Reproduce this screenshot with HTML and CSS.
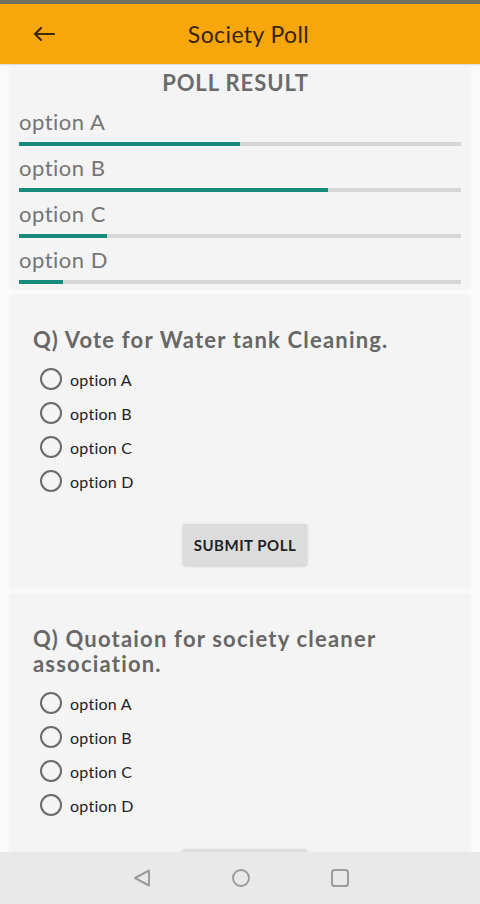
FILE: index.html
```html
<!DOCTYPE html>
<html lang="en">
<head>
  <meta charset="UTF-8" />
  <meta name="viewport" content="width=device-width, initial-scale=1.0" />
  <title>Society Poll</title>
  <link rel="stylesheet" href="styles.css">
</head>
<body>
  <div class="status"></div>

  <!-- App bar -->
  <header class="appbar">
    <svg class="back" width="22" height="14" viewBox="0 0 22 14">
      <path d="M21 7H2M8 1L2 7l6 6" fill="none" stroke="#3d2b10" stroke-width="2.2" stroke-linecap="round" stroke-linejoin="round"/>
    </svg>
    <h1 class="title">Society Poll</h1>
    <span class="spacer"></span>
  </header>

  <main class="content">
    <!-- Result card -->
    <section class="card result">
      <h2>POLL RESULT</h2>
      <div class="row">
        <div class="label">option A</div>
        <div class="track"><div class="fill" style="width:50%"></div></div>
      </div>
      <div class="row">
        <div class="label">option B</div>
        <div class="track"><div class="fill" style="width:70%"></div></div>
      </div>
      <div class="row">
        <div class="label">option C</div>
        <div class="track"><div class="fill" style="width:20%"></div></div>
      </div>
      <div class="row">
        <div class="label">option D</div>
        <div class="track"><div class="fill" style="width:10%"></div></div>
      </div>
    </section>

    <!-- Question 1 -->
    <section class="card poll">
      <h3>Q) Vote for Water tank Cleaning.</h3>
      <label class="opt"><span class="radio"></span>option A</label>
      <label class="opt"><span class="radio"></span>option B</label>
      <label class="opt"><span class="radio"></span>option C</label>
      <label class="opt"><span class="radio"></span>option D</label>
      <div class="actions"><button>SUBMIT POLL</button></div>
    </section>

    <!-- Question 2 -->
    <section class="card poll">
      <h3>Q) Quotaion for society cleaner association.</h3>
      <label class="opt"><span class="radio"></span>option A</label>
      <label class="opt"><span class="radio"></span>option B</label>
      <label class="opt"><span class="radio"></span>option C</label>
      <label class="opt"><span class="radio"></span>option D</label>
      <div class="actions"><button>SUBMIT POLL</button></div>
    </section>
  </main>

  <!-- System nav -->
  <nav class="navbar">
    <svg width="20" height="20" viewBox="0 0 20 20"><path d="M17 2.5L3 10l14 7.5z" fill="none" stroke="#9c9c9c" stroke-width="2" stroke-linejoin="round"/></svg>
    <svg width="20" height="20" viewBox="0 0 20 20"><circle cx="10" cy="10" r="8" fill="none" stroke="#9c9c9c" stroke-width="2"/></svg>
    <svg width="20" height="20" viewBox="0 0 20 20"><rect x="2" y="2" width="16" height="16" rx="2.5" fill="none" stroke="#9c9c9c" stroke-width="2"/></svg>
  </nav>
</body>
</html>
```

FILE: styles.css
```css
/* ---------- Base ---------- */
*, *::before, *::after { box-sizing: border-box; margin: 0; padding: 0; }
html, body { height: 100%; }
body {
  font-family: Lato, "Open Sans", sans-serif;
  background: #fafafa;
  display: flex; flex-direction: column;
  height: 904px; overflow: hidden;
}

/* ---------- Top bars ---------- */
.status { height: 4px; background: #6f6f62; flex-shrink: 0; }
.appbar {
  height: 60px; flex-shrink: 0;
  background: #f7a60b;
  display: flex; align-items: center;
  padding-left: 33px;
  box-shadow: 0 1px 2px rgba(0,0,0,.15);
}
.back { display: block; }
.title {
  flex: 1; text-align: center;
  font-size: 23px; font-weight: 400; color: #352410; letter-spacing: .4px;
}
.spacer { width: 38px; }

/* ---------- Content ---------- */
.content { flex: 1; overflow: hidden; padding: 1px 10px 0; }
.card {
  background: #f4f4f4;
  box-shadow: 0 0 2px rgba(0,0,0,.06);
  margin-bottom: 6px;
}

/* result card */
.result { padding: 6px 9px 5px; }
.result h2 {
  text-align: center; font-size: 22px; line-height: 24px;
  font-weight: 700; color: #6b6b6b; letter-spacing: .9px;
  padding-right: 9px;
  margin-bottom: 13px;
}
.row + .row { margin-top: 8px; }
.label { font-size: 22px; line-height: 28px; color: #757575; letter-spacing: .5px; margin-bottom: 6px; }
.track { height: 4px; background: #d6d6d6; }
.fill { height: 100%; background: #17897d; }

/* poll cards */
.poll { padding: 32px 23px 23px; }
.poll h3 {
  font-size: 22px; line-height: 25px; font-weight: 700; color: #676767;
  letter-spacing: 1.2px;
  margin-bottom: 10px;
}
.opt {
  display: flex; align-items: center;
  height: 34px; padding-left: 7px;
  font-size: 16px; color: #222; letter-spacing: .25px;
}
.radio {
  width: 22px; height: 22px; border-radius: 50%;
  border: 2px solid #6a6a6a; margin-right: 8px;
}
.actions { display: flex; justify-content: center; padding-left: 10px; margin-top: 26px; }
.poll + .poll .opt:first-of-type { margin-top: 1px; }
.poll + .poll .actions { margin-top: 27px; }
button {
  width: 124px; height: 41px; border: none; border-radius: 2px;
  background: #dcdcdc; color: #222;
  font-family: inherit; font-size: 15px; font-weight: 700; letter-spacing: .5px;
  box-shadow: 0 1px 3px rgba(0,0,0,.2);
}

/* ---------- System nav ---------- */
.navbar {
  height: 52px; flex-shrink: 0;
  background: #e9e9e9;
  display: flex; align-items: center; justify-content: center; gap: 79px;
  padding-left: 2px;
}
.navbar svg { display: block; }
```
